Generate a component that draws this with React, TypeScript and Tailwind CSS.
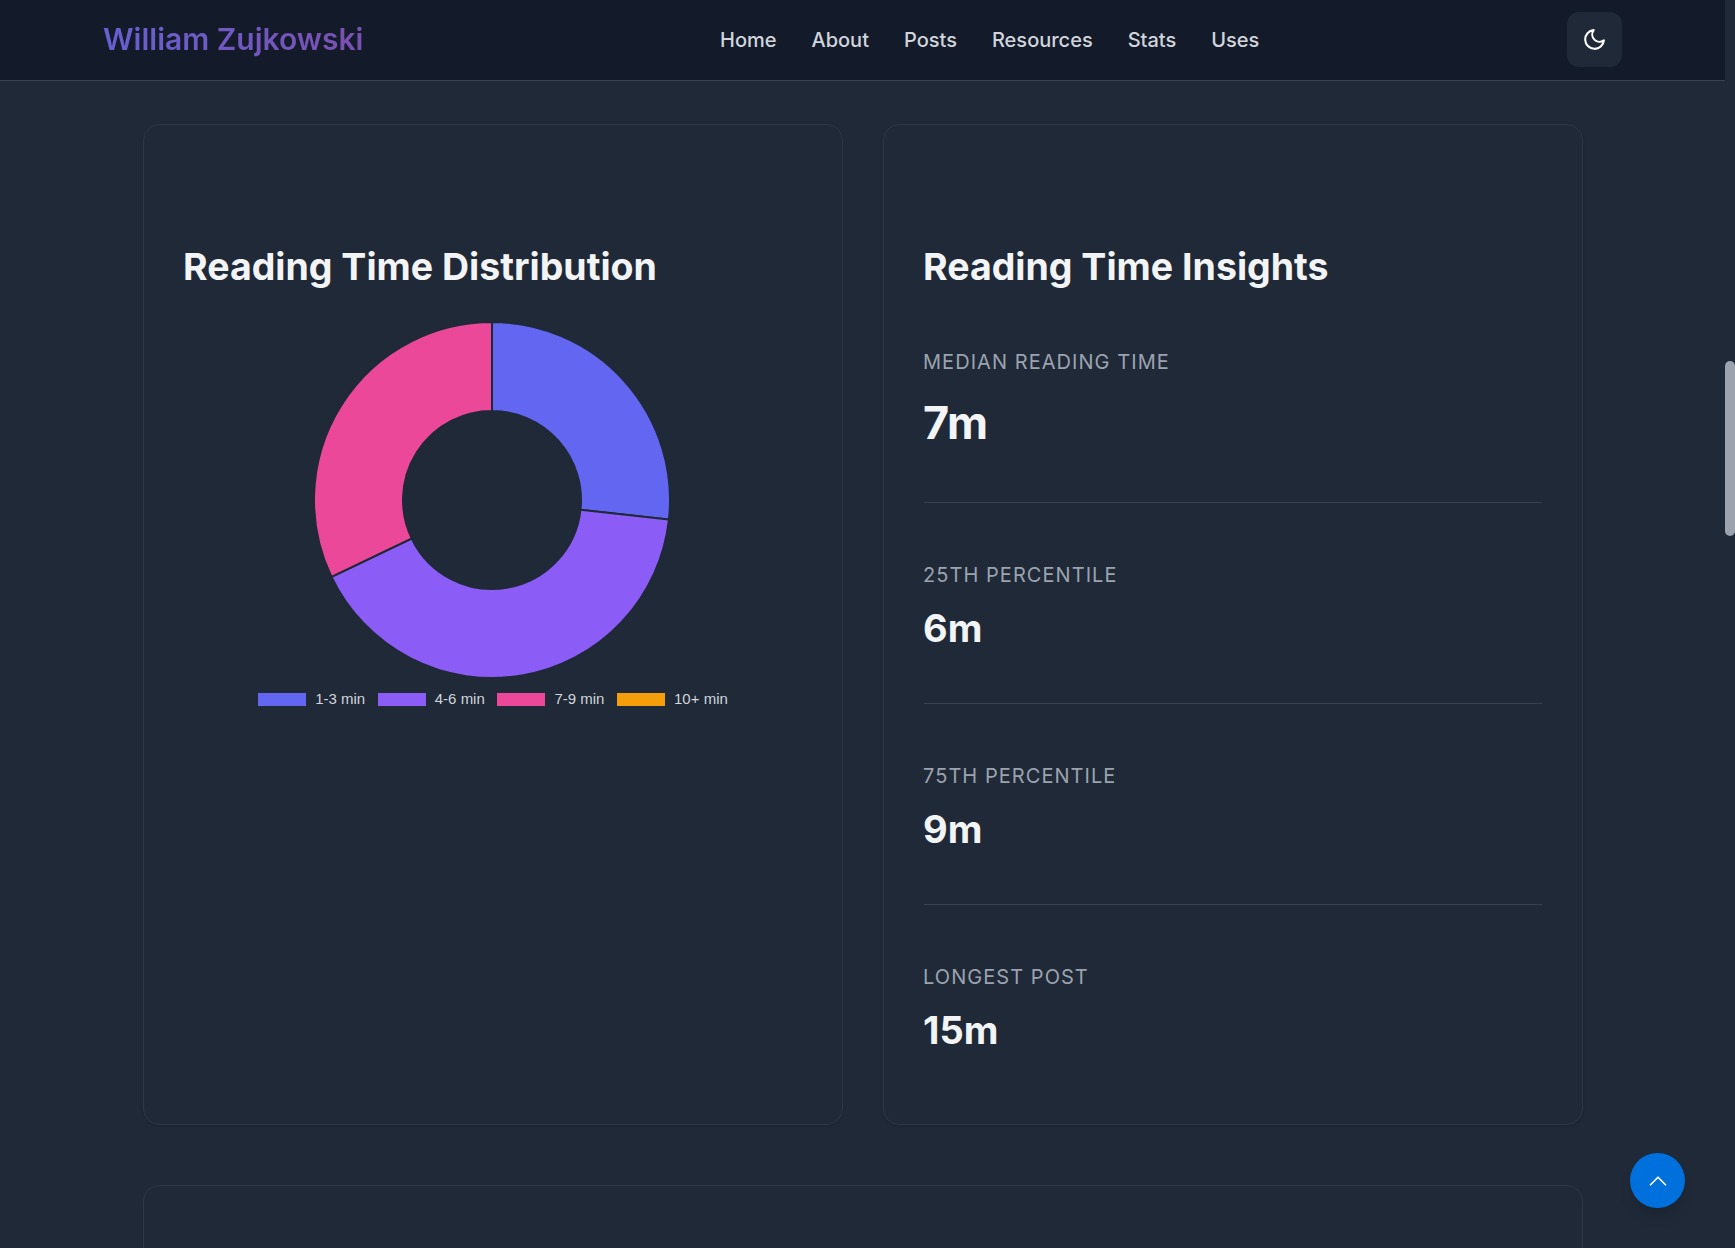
const navLinks = ['Home', 'About', 'Posts', 'Resources', 'Stats', 'Uses']

const legend = [
  {label: '1-3 min', color: 'bg-[#6366f1]'},
  {label: '4-6 min', color: 'bg-[#8b5cf6]'},
  {label: '7-9 min', color: 'bg-[#ec4899]'},
  {label: '10+ min', color: 'bg-[#f59e0b]'}
]

const insights = [
  {label: 'Median Reading Time', value: '7m', big: true},
  {label: '25th Percentile', value: '6m'},
  {label: '75th Percentile', value: '9m'},
  {label: 'Longest Post', value: '15m'}
]

// angles read off the chart, clockwise from 12 o'clock
const slices = [
  {from: 0, to: 96.3, fill: '#6366f1'},
  {from: 96.3, to: 244.4, fill: '#8b5cf6'},
  {from: 244.4, to: 360, fill: '#ec4899'}
]

function slicePath(from: number, to: number) {
  const c = 179
  const R = 178
  const r = 89
  const pt = (rad: number, deg: number) => {
    const a = (deg * Math.PI) / 180
    return `${(c + rad * Math.sin(a)).toFixed(2)} ${(c - rad * Math.cos(a)).toFixed(2)}`
  }
  const large = to - from > 180 ? 1 : 0
  return `M${pt(R, from)} A${R} ${R} 0 ${large} 1 ${pt(R, to)} L${pt(r, to)} A${r} ${r} 0 ${large} 0 ${pt(r, from)} Z`
}

function Donut() {
  return (
    <svg viewBox="0 0 358 358" className="block w-[358px] h-[358px] mr-[2px]">
      {slices.map(s => (
        <path key={s.from} d={slicePath(s.from, s.to)} fill={s.fill} stroke="#1f2937" strokeWidth={2} />
      ))}
    </svg>
  )
}

export default function App() {
  return (
    <div className="relative flex w-full h-[1248px] overflow-hidden bg-[#1f2937] font-['Inter',sans-serif] text-[#f3f4f6]">
      <div className="flex-1 min-w-0">
        {/* header */}
        <header className="flex items-center h-[81px] pl-[103px] pr-[103px] bg-[#131a2a] border-b border-[#374151]">
          <div className="w-[617px] shrink-0 mb-[2px]">
            <a className="inline-block text-[30px] leading-[40px] font-semibold whitespace-nowrap bg-gradient-to-r from-[#6660d0] to-[#7a50b0] bg-clip-text text-transparent">
              William Zujkowski
            </a>
          </div>
          <nav className="flex gap-[35px] text-[20px] font-medium text-[#d1d5db]">
            {navLinks.map(link => (
              <a key={link}>{link}</a>
            ))}
          </nav>
          <button className="flex items-center justify-center ml-auto mb-px w-[55px] h-[55px] rounded-xl bg-[#1f2937]">
            <svg viewBox="0 0 24 24" fill="none" stroke="white" strokeWidth={2} strokeLinecap="round" strokeLinejoin="round" className="w-[25px] h-[25px] -ml-px">
              <path d="M21 12.79A9 9 0 1 1 11.21 3 7 7 0 0 0 21 12.79z" />
            </svg>
          </button>
        </header>

        {/* cards */}
        <main className="pl-[143px] pr-[142px] pt-[43px]">
          <div className="grid grid-cols-2 gap-10">
            <section className="h-[1001px] rounded-2xl border border-[#2d3748] bg-[#1f2937] p-10 pt-[115px] shadow-sm">
              <h2 className="-ml-px text-[37.5px] leading-[54px] font-bold">Reading Time Distribution</h2>
              <div className="flex flex-col items-center mt-[27px]">
                <Donut />
                <div className="flex items-center gap-[12.6px] mt-[12px] font-['Liberation_Sans',sans-serif] text-[15px] leading-4 text-[#d1d5db]">
                  {legend.map(l => (
                    <div key={l.label} className="flex items-center gap-[9px]">
                      <span className={`block w-[48px] h-[13px] ${l.color}`} />
                      <span>{l.label}</span>
                    </div>
                  ))}
                </div>
              </div>
            </section>

            <section className="h-[1001px] rounded-2xl border border-[#2d3748] bg-[#1f2937] p-10 pt-[115px] shadow-sm">
              <h2 className="-ml-px text-[37.5px] leading-[54px] font-bold">Reading Time Insights</h2>
              <div className="mt-[53px]">
                {insights.map((item, i) => (
                  <div key={item.label} className={i < insights.length - 1 ? 'pb-[46px] mb-[57px] border-b border-[#374151]' : ''}>
                    <div className="-ml-px text-[20px] leading-[30px] uppercase tracking-[1.05px] text-[#9ca3af]">{item.label}</div>
                    <div className={`-ml-px font-bold ${item.big ? 'mt-[12px] text-[45px] leading-[67px]' : 'mt-[10px] text-[38px] leading-[57px]'}`}>
                      {item.value}
                    </div>
                  </div>
                ))}
              </div>
            </section>
          </div>

          <section className="h-[200px] mt-[60px] rounded-2xl border border-[#2d3748] bg-[#1f2937]" />
        </main>
      </div>

      {/* scrollbar */}
      <aside className="w-[10px] shrink-0">
        <div className="mt-[361px] h-[175px] rounded-full bg-[#9ca3af]" />
      </aside>

      {/* back to top */}
      <button className="absolute left-[1630px] top-[1153px] flex items-center justify-center w-[55px] h-[55px] rounded-full bg-[#0070dd] shadow-lg">
        <svg viewBox="0 0 24 24" fill="none" stroke="white" strokeWidth={1.75} strokeLinecap="round" strokeLinejoin="round" className="w-6 h-6">
          <path d="M4.5 15.75l7.5-7.5 7.5 7.5" />
        </svg>
      </button>
    </div>
  )
}
